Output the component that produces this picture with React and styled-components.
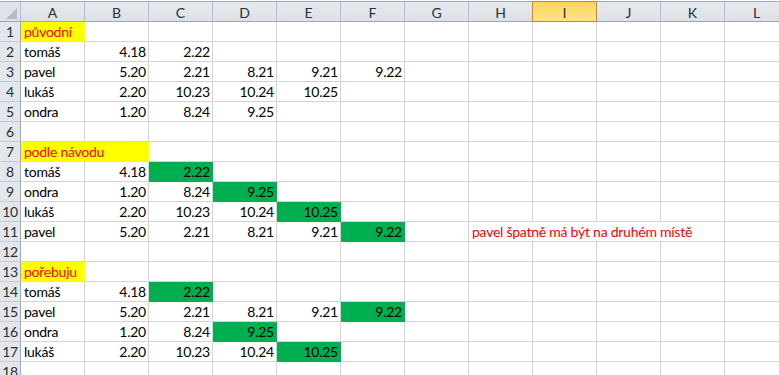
import styled, { createGlobalStyle } from "styled-components";

const GlobalStyle = createGlobalStyle`
  html, body {
    margin: 0;
    padding: 0;
    background: #ffffff;
    overflow: hidden;
  }
  body {
    font-family: Lato, "Liberation Sans", Arial, sans-serif;
  }
`;

const COLS = ["A", "B", "C", "D", "E", "F", "G", "H", "I", "J", "K", "L"];
const SELECTED_COL = "I";

// each row: list of cells { v, num, fill, red, span }
const N = (v, fill) => ({ v, num: true, fill });
const T = (v, extra = {}) => ({ v, ...extra });

const data = {
  1: [T("původní", { fill: "#ffff00", red: true })],
  2: [T("tomáš"), N("4.18"), N("2.22")],
  3: [T("pavel"), N("5.20"), N("2.21"), N("8.21"), N("9.21"), N("9.22")],
  4: [T("lukáš"), N("2.20"), N("10.23"), N("10.24"), N("10.25")],
  5: [T("ondra"), N("1.20"), N("8.24"), N("9.25")],
  7: [T("podle návodu", { fill: "#ffff00", red: true, span: 2 })],
  8: [T("tomáš"), N("4.18"), N("2.22", "#00b050")],
  9: [T("ondra"), N("1.20"), N("8.24"), N("9.25", "#00b050")],
  10: [T("lukáš"), N("2.20"), N("10.23"), N("10.24"), N("10.25", "#00b050")],
  11: [
    T("pavel"),
    N("5.20"),
    N("2.21"),
    N("8.21"),
    N("9.21"),
    N("9.22", "#00b050"),
    T(""),
    T("pavel špatně má být na druhém místě", { red: true, span: 4 }),
  ],
  13: [T("pořebuju", { fill: "#ffff00", red: true })],
  14: [T("tomáš"), N("4.18"), N("2.22", "#00b050")],
  15: [T("pavel"), N("5.20"), N("2.21"), N("8.21"), N("9.21"), N("9.22", "#00b050")],
  16: [T("ondra"), N("1.20"), N("8.24"), N("9.25", "#00b050")],
  17: [T("lukáš"), N("2.20"), N("10.23"), N("10.24"), N("10.25", "#00b050")],
};

const Sheet = styled.div`
  display: grid;
  grid-template-columns: 21px repeat(12, 64px);
  grid-template-rows: 22px repeat(18, 20px);
  width: 779px;
  height: 375px;
  overflow: hidden;
`;

const Corner = styled.div`
  background: #dfe3e8;
  border-top: 1px solid #9ea7b2;
  margin-top: 1px;
  border-right: 1px solid #b7bdc6;
  border-bottom: 1px solid #9ea7b2;
  box-sizing: border-box;
  display: flex;
  align-items: flex-end;
  justify-content: flex-end;
  padding: 0 3px 2px 0;
`;

const ColHead = styled.div`
  box-sizing: border-box;
  margin-top: 1px;
  border-top: 1px solid ${(p) => (p.$sel ? "#c18a33" : "#9ea7b2")};
  border-right: 1px solid ${(p) => (p.$sel ? "#c18a33" : "#b7bdc6")};
  border-bottom: 1px solid ${(p) => (p.$sel ? "#c18a33" : "#9ea7b2")};
  border-left: ${(p) => (p.$sel ? "1px solid #c18a33" : "none")};
  margin-left: ${(p) => (p.$sel ? "-1px" : "0")};
  background: ${(p) =>
    p.$sel
      ? "linear-gradient(#ffd35a, #ffe58a)"
      : "linear-gradient(#e6e9ee, #dde1e6)"};
  color: #2a2f36;
  font-size: 14px;
  display: flex;
  align-items: center;
  justify-content: center;
  padding-top: 1px;
`;

const RowHead = styled.div`
  box-sizing: border-box;
  background: #e3e6eb;
  border-right: 1px solid #9ea7b2;
  border-bottom: 1px solid #c5cad2;
  color: #2a2f36;
  font-size: 14px;
  line-height: 20px;
  text-align: center;
  white-space: nowrap;
  letter-spacing: -0.3px;
`;

const Cell = styled.div`
  box-sizing: border-box;
  grid-column: span ${(p) => p.$span || 1};
  background: ${(p) => p.$fill || "#ffffff"};
  border-right: 1px solid ${(p) => p.$fill || "#d4d4d4"};
  border-bottom: 1px solid ${(p) => p.$fill || "#d4d4d4"};
  color: ${(p) => (p.$red ? "#ff0000" : "#000000")};
  font-size: 14px;
  letter-spacing: -0.25px;
  line-height: 20px;
  padding: 0 2px 0 3px;
  text-align: ${(p) => (p.$num ? "right" : "left")};
  white-space: nowrap;
  overflow: visible;
`;

const Triangle = () => (
  <svg width="11" height="11" viewBox="0 0 11 11">
    <polygon points="11,0 11,11 0,11" fill="#b4bac2" />
  </svg>
);

const buildRow = (r) => {
  const cells = data[r] || [];
  const out = [];
  let col = 0;
  cells.forEach((c, i) => {
    out.push(
      <Cell
        key={r + "-" + i}
        $span={c.span}
        $fill={c.fill}
        $red={c.red}
        $num={c.num}
      >
        {c.v}
      </Cell>
    );
    col += c.span || 1;
  });
  while (col < COLS.length) {
    out.push(<Cell key={r + "-e" + col} />);
    col++;
  }
  return out;
};

const App = () => {
  const rows = Array.from({ length: 18 }, (_, i) => i + 1);
  return (
    <>
      <GlobalStyle />
      <Sheet>
        <Corner>
          <Triangle />
        </Corner>
        {COLS.map((c) => (
          <ColHead key={c} $sel={c === SELECTED_COL}>
            {c}
          </ColHead>
        ))}
        {rows.map((r) => [
          <RowHead key={"h" + r}>{r}</RowHead>,
          ...buildRow(r),
        ])}
      </Sheet>
    </>
  );
};

export default App;
